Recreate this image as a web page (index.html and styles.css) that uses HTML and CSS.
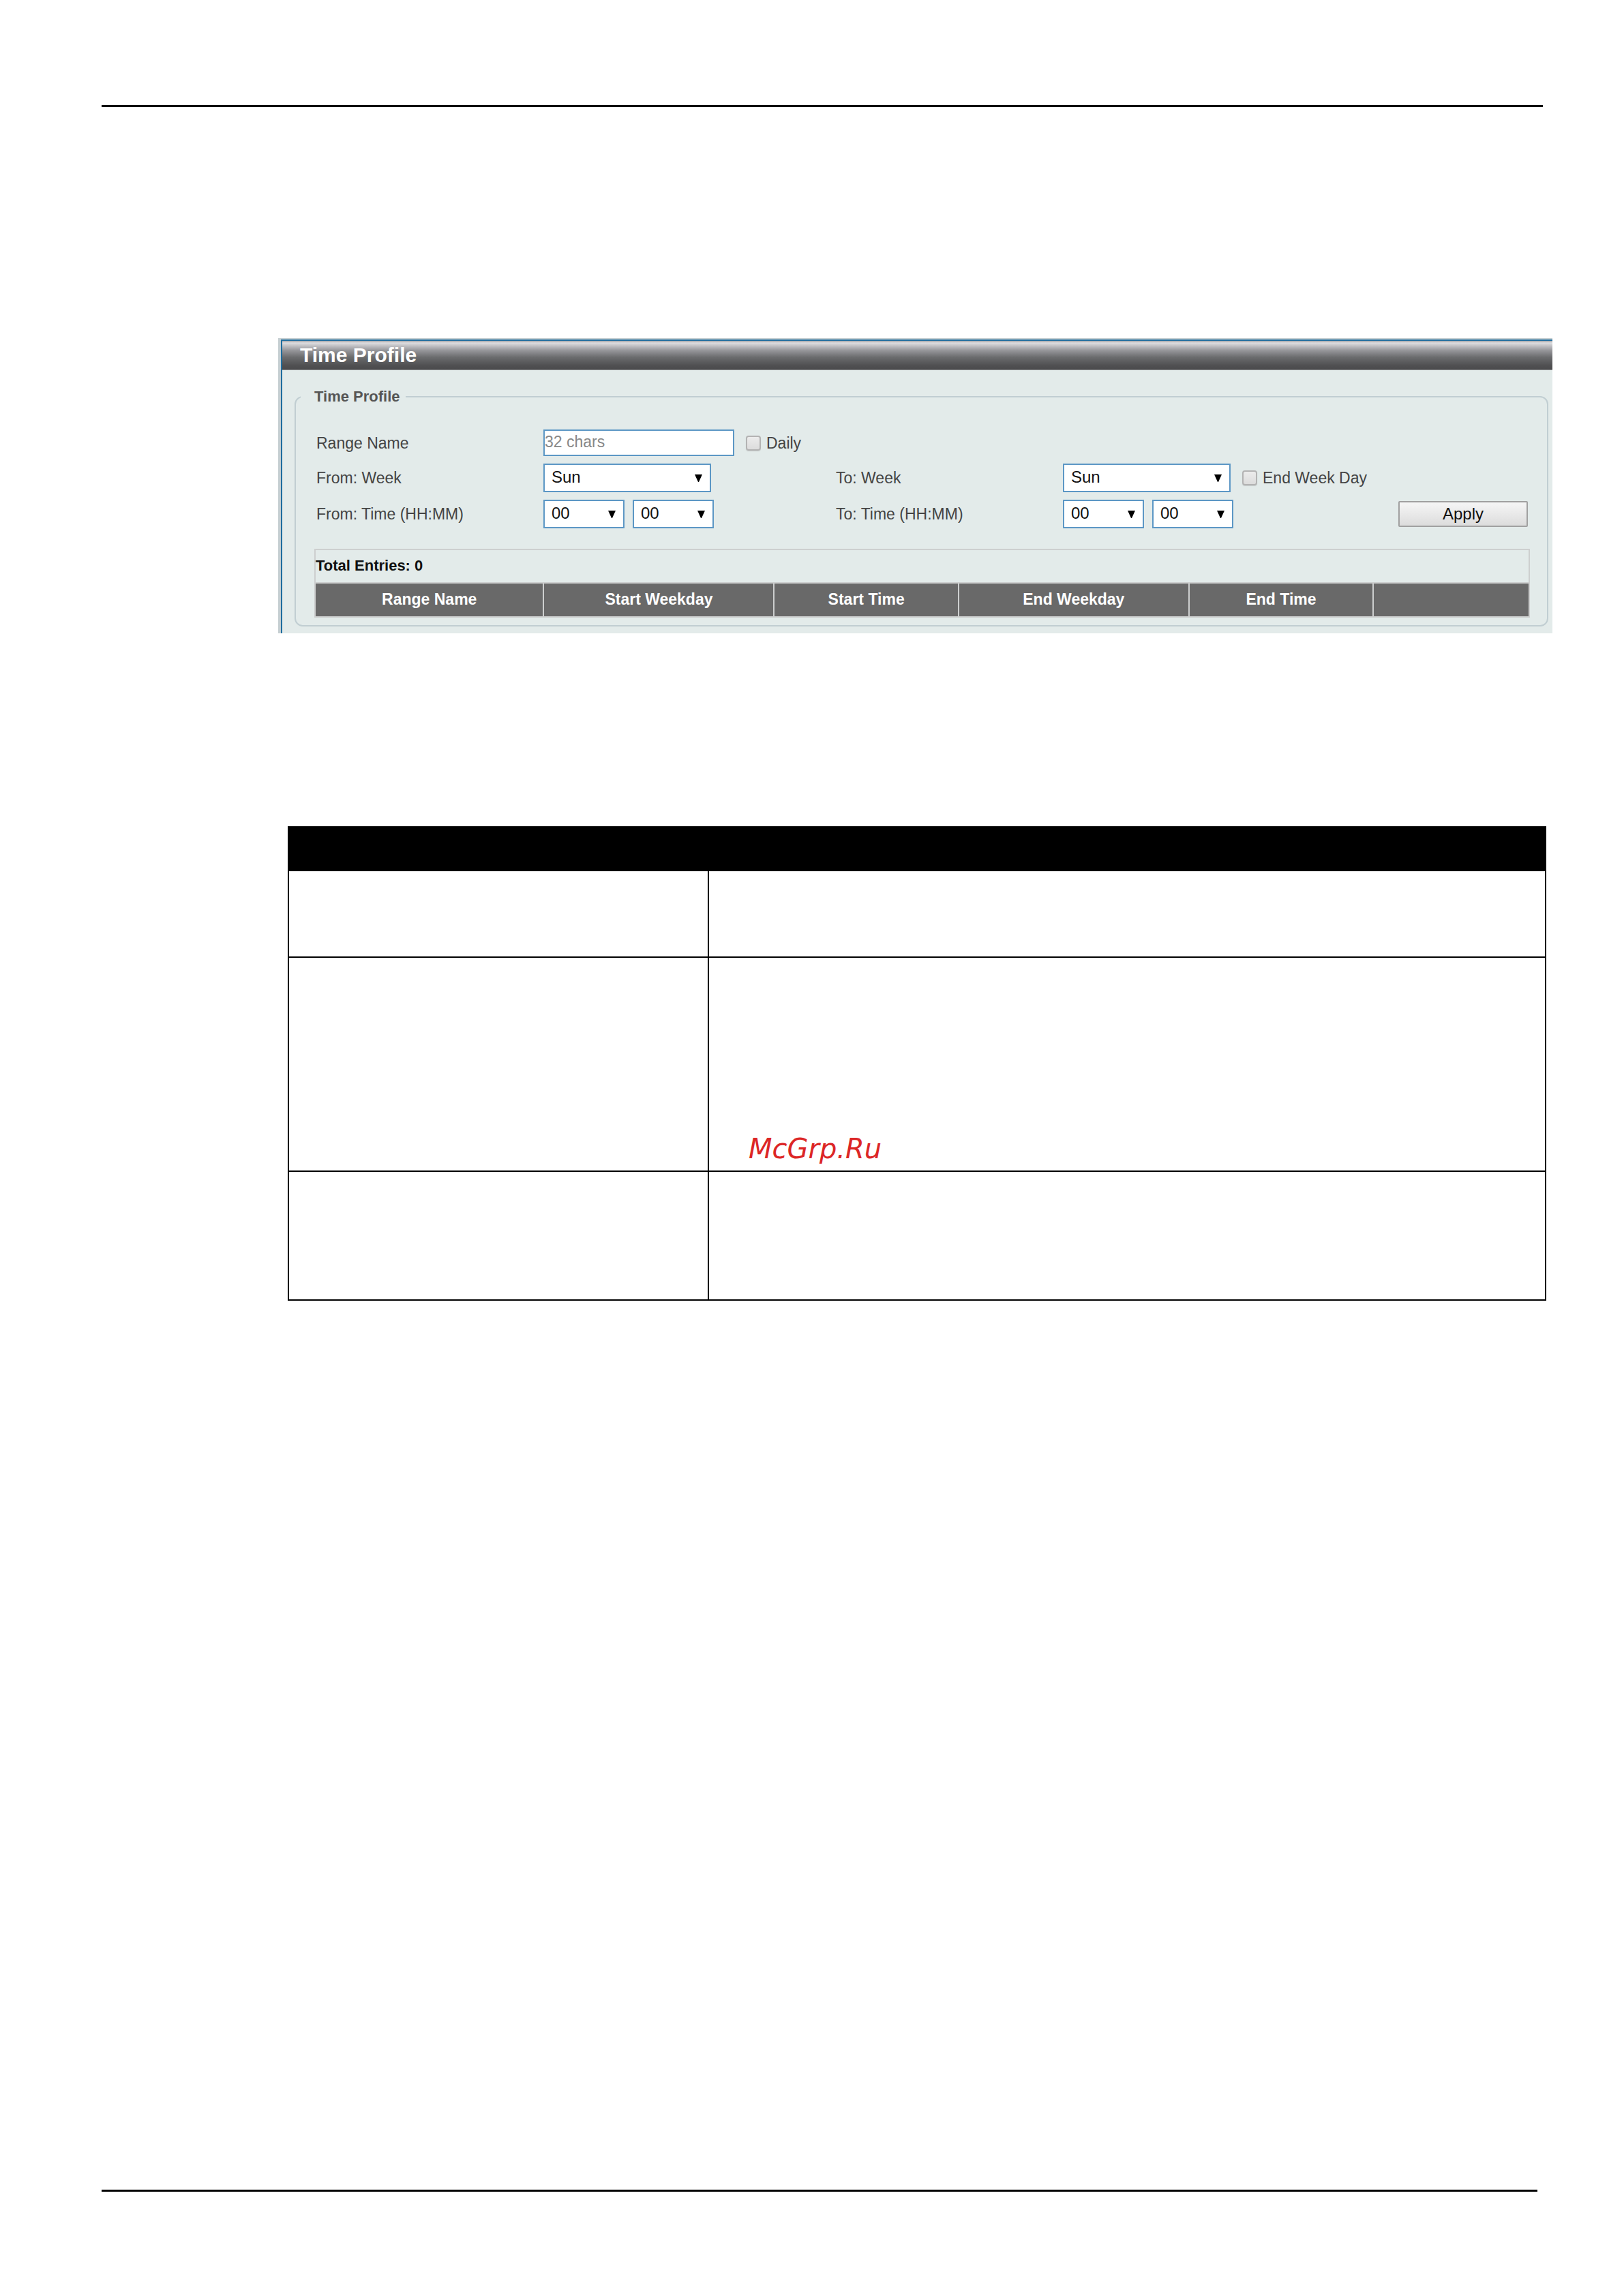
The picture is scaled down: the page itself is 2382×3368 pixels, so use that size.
FILE: index.html
```html
<!DOCTYPE html>
<html lang="en">
<head>
<meta charset="utf-8">
<title>Time Profile</title>
<link rel="stylesheet" href="styles.css">
</head>

<body>
<header class="page-top"></header>

<main>
<div class="panel">
 <div class="panel-inner">
 <h1>Time Profile</h1>

 <form class="panel-body">
 <fieldset>
  <legend>Time Profile</legend>

  <div class="fields">
   <label for="range-name">Range Name</label>
   <div class="controls wide">
    <input type="text" id="range-name" placeholder="32 chars">
    <label class="check"><input type="checkbox" name="daily">Daily</label>
   </div>

   <label for="from-week">From: Week</label>
   <div class="controls">
    <select id="from-week" class="week"><option>Sun</option><option>Mon</option><option>Tue</option><option>Wed</option><option>Thu</option><option>Fri</option><option>Sat</option></select>
   </div>
   <label for="to-week">To: Week</label>
   <div class="controls">
    <select id="to-week" class="week"><option>Sun</option><option>Mon</option><option>Tue</option><option>Wed</option><option>Thu</option><option>Fri</option><option>Sat</option></select>
    <label class="check"><input type="checkbox" name="end-week-day">End Week Day</label>
   </div>

   <label for="from-hour">From: Time (HH:MM)</label>
   <div class="controls">
    <select id="from-hour" class="time"><option>00</option></select>
    <select id="from-min" class="time" aria-label="From minute"><option>00</option></select>
   </div>
   <label for="to-hour">To: Time (HH:MM)</label>
   <div class="controls">
    <select id="to-hour" class="time"><option>00</option></select>
    <select id="to-min" class="time" aria-label="To minute"><option>00</option></select>
    <button type="button">Apply</button>
   </div>
  </div>

  <div class="entries">
   <p>Total Entries: 0</p>
   <table>
    <colgroup><col class="c-name"><col class="c-day"><col class="c-time"><col class="c-day"><col class="c-time"><col></colgroup>
    <tr><th>Range Name</th><th>Start Weekday</th><th>Start Time</th><th>End Weekday</th><th>End Time</th><th></th></tr>
   </table>
  </div>
 </fieldset>
 </form>
 </div>
</div>

<table class="params">
 <tr class="head"><th></th><th></th></tr>
 <tr class="short"><td></td><td></td></tr>
 <tr class="tall"><td></td><td class="mark">McGrp.Ru</td></tr>
 <tr class="medium"><td></td><td></td></tr>
</table>
</main>

<footer class="page-bottom"></footer>
</body>
</html>
```

FILE: styles.css
```css
*{
 box-sizing:border-box;
}
body{
 display:flex;
 flex-direction:column;
 min-height:100vh;
 margin:0;
 padding:154px 119px 153px 149px;
 background:#fff;
 color:#444;
 font:22px/26px "Liberation Sans", Arial, sans-serif;
}
.page-top{
 border-top:3px solid #000;
}
.page-bottom{
 margin:auto 8px 0 0;
 border-top:3px solid #000;
}
main{
 margin:339px -14px 0 259px;
}

/* switch web page */
.panel{
 border-top:2px solid #c6cfd2;
 border-left:4px solid #c6cfd2;
 background:#e3ebea;
}
.panel-inner{
 border-top:2px solid #1f6d9e;
 border-left:2px solid #1f6d9e;
}
h1{
 margin:0;
 padding:0 26px;
 height:43px;
 background:linear-gradient(#a5a5a8, #dddde0 3px, #96969a 14px, #6b6c6e 24px, #505052 36px, #4b4b4d 41px, #858788);
 color:#fff;
 font-size:30px;
 line-height:42px;
}
.panel-body{
 padding:26px 6px 10px 18px;
}
fieldset{
 margin:0;
 padding:35px 25px 11px 27px;
 border:2px solid #c1ced2;
 border-radius:12px;
 min-width:0;
}
legend{
 margin-left:-20px;
 padding:0 8px 0 20px;
 color:#555;
 font-weight:bold;
}
.fields{
 display:grid;
 grid-template-columns:333fr 429fr 333fr 682fr;
 grid-template-rows:39px 42px 42px;
 gap:11px 0;
 align-items:center;
 padding:0 3px;
}
.controls{
 display:flex;
 align-items:center;
 gap:12px;
}
.wide{
 grid-column:span 3;
}
.fields label{
 font-size:23px;
 line-height:24px;
}
input[type=text], select{
 appearance:none;
 margin:0;
 border:2px solid #5c97c5;
 border-radius:0;
 background:#fff;
 font-family:inherit;
}
input[type=text]{
 width:280px;
 height:39px;
 padding:0 0 2px;
 font-size:23px;
}
input::placeholder{
 color:#888;
}
select{
 height:42px;
 padding:0 30px 3px 10px;
 background:#fff url("data:image/svg+xml,%3Csvg xmlns='http://www.w3.org/2000/svg' width='11' height='11'%3E%3Cpath d='M0 0h11L6 11H5z'/%3E%3C/svg%3E") no-repeat right 11px center;
 color:#111;
 font-size:24px;
}
.week{
 width:246px;
}
.time{
 width:119px;
}
.check{
 display:flex;
 align-items:center;
 gap:8px;
 margin-left:5px;
}
input[type=checkbox]{
 appearance:none;
 width:22px;
 height:22px;
 margin:0;
 border:2px solid #b3b3b3;
 border-radius:4px;
 background:linear-gradient(#ececec, #dcdcdc);
 box-shadow:0 1px 1px #c5caca;
}
button{
 width:190px;
 height:38px;
 margin-left:auto;
 padding:0;
 border:2px solid #a0a0a0;
 border-radius:2px;
 background:linear-gradient(#f6f6f6, #dcdcdc);
 color:#111;
 font-family:inherit;
 font-size:24px;
 line-height:32px;
}
.entries{
 margin-top:30px;
 border:2px solid #cdcfcf;
 color:#111;
}
.entries p{
 margin:0;
 padding-bottom:2px;
 font-weight:bold;
 line-height:45px;
}
.entries table{
 width:100%;
 table-layout:fixed;
 border-collapse:collapse;
 border-top:2px solid #cdcfcf;
}
.entries th{
 height:49px;
 padding:0 0 2px;
 border-left:2px solid #cdcfcf;
 background:#696969;
 color:#fff;
 font-size:23px;
}
.entries th:first-child{
 border-left:0;
}
.c-name{
 width:18.8%;
}
.c-day{
 width:19%;
}
.c-time{
 width:15.2%;
}

/* parameter table */
.params{
 width:calc(100% - 23px);
 margin:283px 9px 0 14px;
 table-layout:fixed;
 border-collapse:collapse;
}
.params th, .params td{
 padding:0;
 border:2px solid #000;
}
.params th:first-child{
 width:616px;
}
.head{
 height:64px;
 background:#000;
}
.short{
 height:127px;
}
.tall{
 height:314px;
}
.medium{
 height:189px;
}
.params .mark{
 padding:0 58px 8px;
 vertical-align:bottom;
 color:#dc2626;
 font:italic 40px/48px "DejaVu Sans", Verdana, sans-serif;
}
```
